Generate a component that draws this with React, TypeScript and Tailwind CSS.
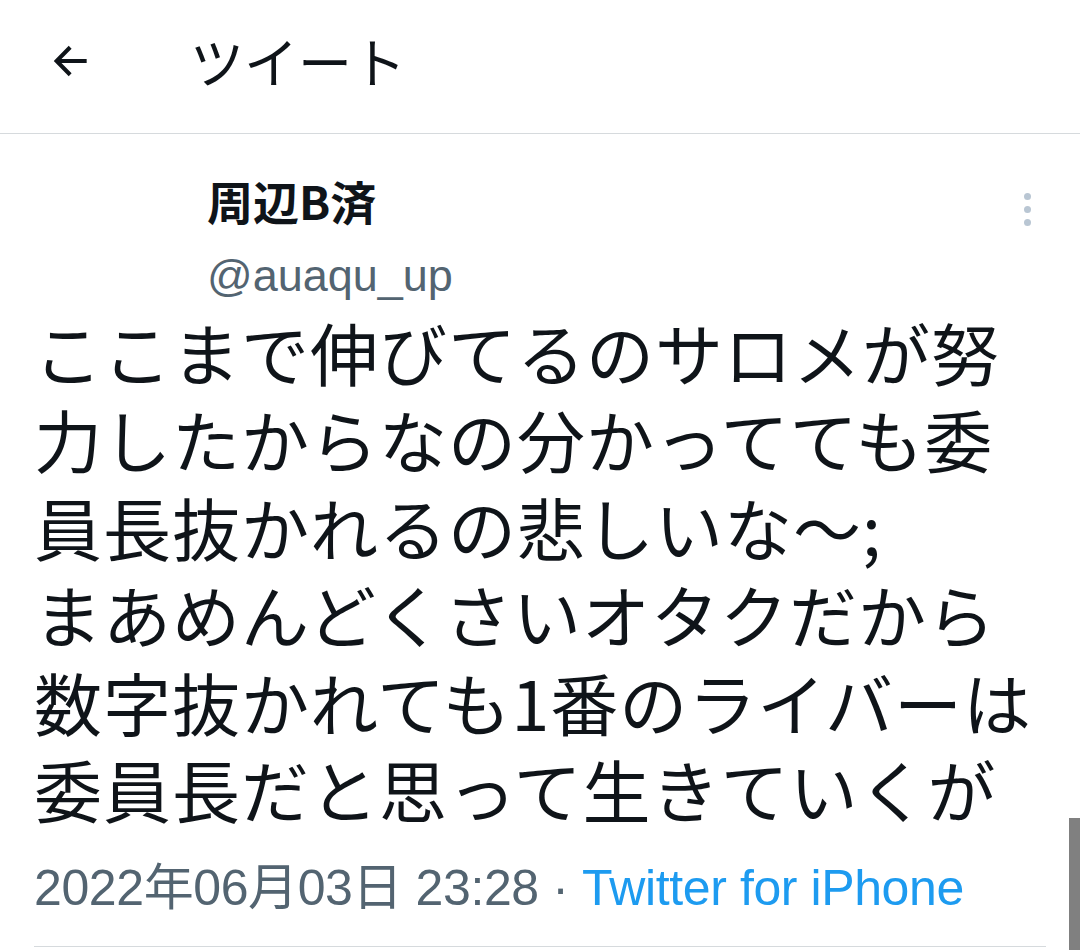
import React from 'react';

const jp = { fontFamily: '"Noto Sans CJK JP", "Liberation Sans", sans-serif' };
const latin = { fontFamily: '"Liberation Sans", "Noto Sans CJK JP", sans-serif' };

const lines = [
  'ここまで伸びてるのサロメが努',
  '力したからなの分かってても委',
  '員長抜かれるの悲しいな〜;',
  'まあめんどくさいオタクだから',
  '数字抜かれても1番のライバーは',
  '委員長だと思って生きていくが',
];

export default function App() {
  return (
    <div className="relative w-[1080px] h-[950px] overflow-hidden bg-white text-[#0f1419]" style={jp}>
      {/* Header */}
      <div className="flex items-center h-[134px] pb-[12px] border-b border-[#d6dadd]">
        <div className="w-[190px] pl-[50px] flex items-center">
          <svg width="44" height="44" viewBox="0 0 24 24" fill="none" stroke="#0f1419" strokeWidth="2.2" strokeLinecap="butt">
            <path d="M20 12H4.5M11 4.5L3.6 12L11 19.5" />
          </svg>
        </div>
        <h1 className="text-[54px] leading-none font-normal">ツイート</h1>
      </div>

      {/* Tweet */}
      <div className="px-[34px] pt-[38px]">
        <div className="flex justify-between">
          <div className="pl-[173px]">
            <div className="text-[46px] leading-[56px] font-bold">周辺B済</div>
            <div className="text-[45px] leading-[52px] mt-[22px] text-[#536471]" style={latin}>@auaqu_up</div>
          </div>
          <div className="flex flex-col gap-[6px] pt-[21px] pr-[15px]">
            <span className="w-[7px] h-[7px] rounded-full bg-[#b9c6d3]" />
            <span className="w-[7px] h-[7px] rounded-full bg-[#b9c6d3]" />
            <span className="w-[7px] h-[7px] rounded-full bg-[#b9c6d3]" />
          </div>
        </div>

        {/* tweet body, wrapped as in the app */}
        <div className="mt-[6px] text-[68px] tracking-[1px]">
          {lines.map((l) => (
            <div key={l} className="h-[87.5px] flex items-center whitespace-nowrap leading-[80px]">{l}</div>
          ))}
        </div>

        <div className="mt-[20px] pb-[28px] text-[50px] leading-[60px] whitespace-nowrap border-b border-[#d6dadd] tracking-[-0.4px]" style={latin}>
          <span className="text-[#536471]">2022<span style={jp}>年</span>06<span style={jp}>月</span>03<span style={jp}>日</span> 23:28 · </span>
          <span className="text-[#1d9bf0]">Twitter for iPhone</span>
        </div>
      </div>

      {/* Scrollbar */}
      <div className="absolute right-0 top-[818px] w-[11px] h-[140px] bg-[#808080]" />
    </div>
  );
}
